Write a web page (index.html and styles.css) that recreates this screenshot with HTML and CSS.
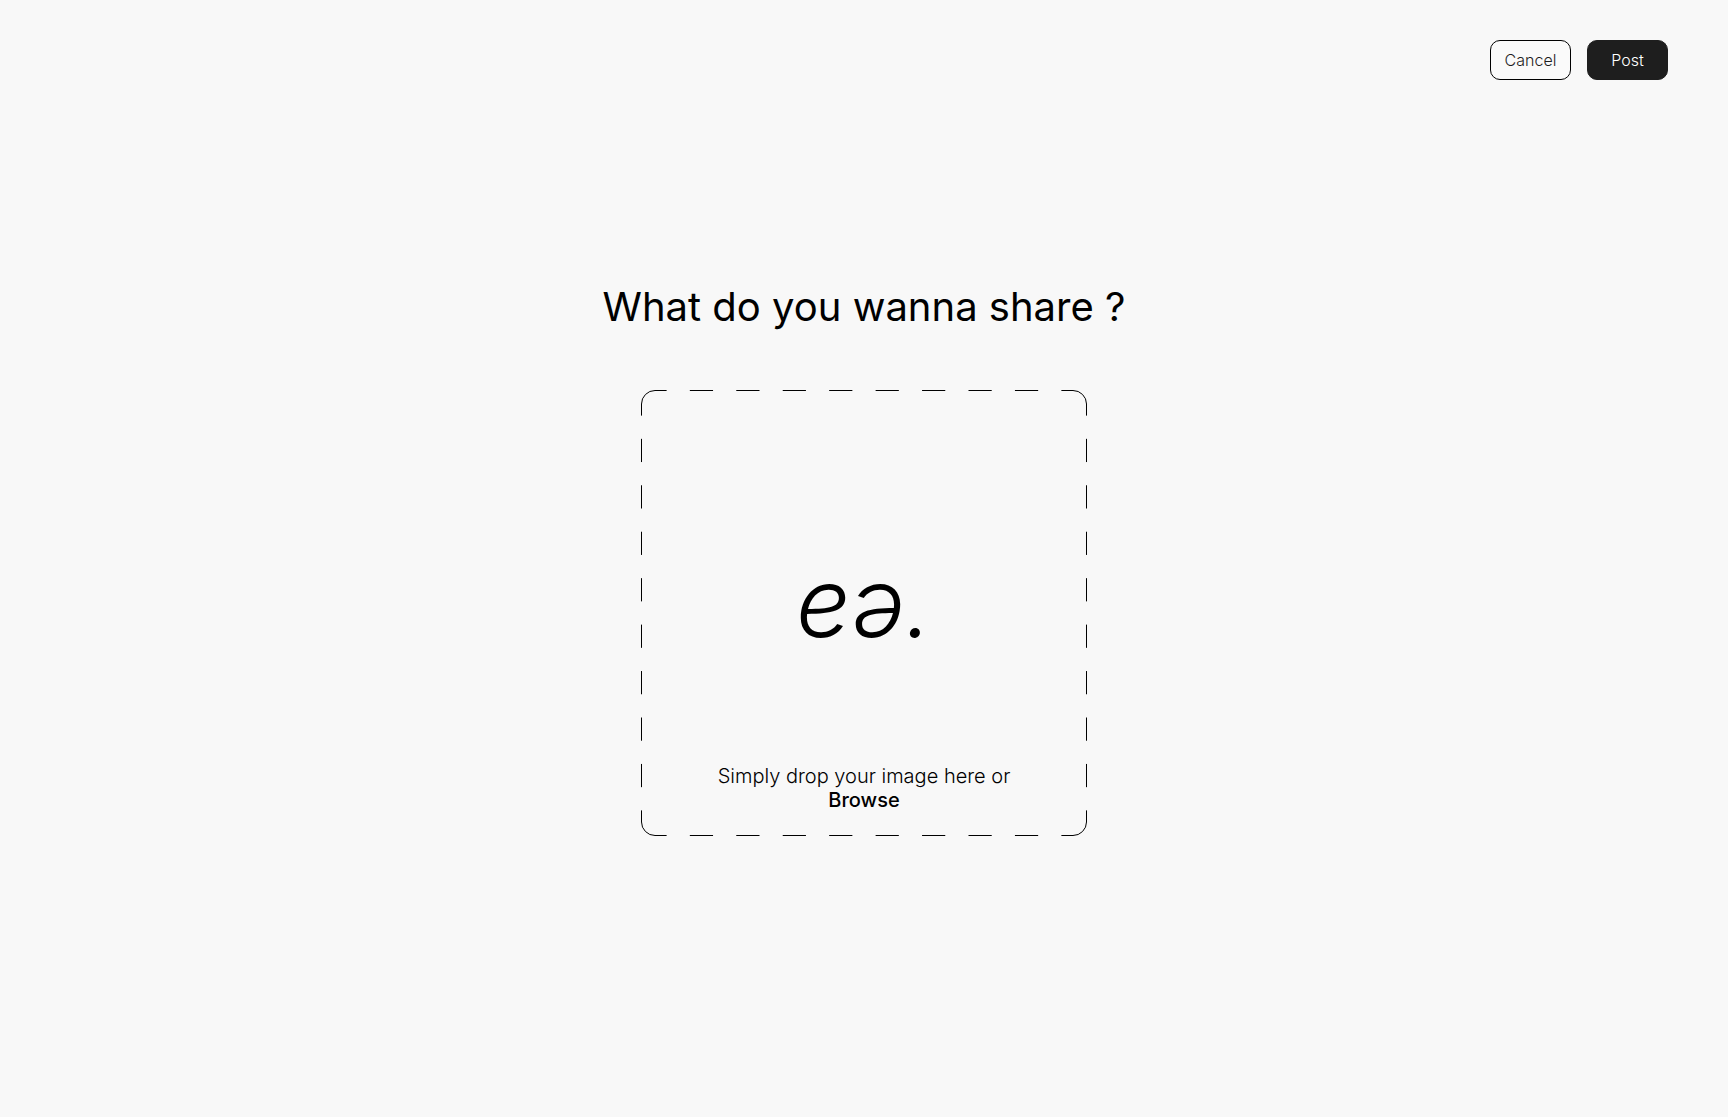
FILE: index.html
```html
<!DOCTYPE html>
<html lang="en">
<head>
  <meta charset="utf-8">
  <meta name="viewport" content="width=device-width, initial-scale=1">
  <title>Share a post</title>
  <link rel="stylesheet" href="styles.css">
</head>
<body>
  <header class="topbar">
    <button type="button" class="button button-outline">Cancel</button>
    <button type="submit" class="button button-solid">Post</button>
  </header>
  <main class="share">
    <h1 class="title">What do you wanna share ?</h1>
    <section class="dropzone" aria-label="Image upload">
      <!-- Each side spans nine dash periods, with a half dash joining each corner -->
      <svg class="outline" viewBox="0 0 446 446" aria-hidden="true">
        <g class="outline-sides">
          <path pathLength="36" d="M14 .5H432"/>
          <path pathLength="36" d="M445.500 14V432"/>
          <path pathLength="36" d="M14 445.500H432"/>
          <path pathLength="36" d="M.5 14V432"/>
        </g>
        <path d="M.5 14A13.500 13.500 0 0 1 14 .5M432 .5A13.500 13.500 0 0 1 445.500 14M445.500 432A13.500 13.500 0 0 1 432 445.500M14 445.500A13.500 13.500 0 0 1 .5 432"/>
      </svg>
      <div class="logo">eə.</div>
      <p class="hint">Simply drop your image here or <button type="button" class="browse">Browse</button></p>
    </section>
  </main>
</body>
</html>
```

FILE: styles.css
```css
* {
  box-sizing: border-box;
}

body {
  margin: 0;
  min-height: 100vh;
  background: #f8f8f8;
  color: #000;
  font-family: Inter, "Liberation Sans", sans-serif;
}

button {
  font: inherit;
  cursor: pointer;
}

.topbar {
  display: flex;
  justify-content: flex-end;
  gap: 16px;
  padding: 40px 60px 0;
}

.button {
  min-width: 81px;
  height: 40px;
  padding: 0 12px;
  border: 1px solid #000;
  border-radius: 10px;
  font-size: 16px;
  font-weight: 300;
}

.button-outline {
  background: #fafafa;
  color: #1e1e1e;
}

.button-solid {
  border-color: #1e1e1e;
  background: #1e1e1e;
  color: #fff;
}

.share {
  display: flex;
  flex-direction: column;
  align-items: center;
  gap: 59px;
  padding: 203px 24px 60px;
}

.title {
  margin: 0;
  font-size: 40px;
  line-height: 48px;
  font-weight: 400;
  text-align: center;
}

.dropzone {
  position: relative;
  display: flex;
  flex-direction: column;
  align-items: center;
  justify-content: flex-end;
  gap: 104px;
  width: 100%;
  max-width: 446px;
  aspect-ratio: 1;
  padding: 24px 60px;
}

.outline {
  position: absolute;
  inset: 0;
  width: 100%;
  height: 100%;
  fill: none;
  stroke: #000;
}

.outline-sides {
  stroke-dasharray: 2 2;
  stroke-dashoffset: 1;
}

.logo {
  font-size: 96px;
  line-height: 116px;
  font-style: italic;
  font-weight: 300;
  font-optical-sizing: none;
  font-variation-settings: "opsz" 14;
}

.hint {
  position: relative;
  margin: 0;
  font-size: 20px;
  line-height: 24px;
  font-weight: 300;
  text-align: center;
}

.browse {
  padding: 0;
  border: 0;
  background: none;
  color: inherit;
  font-weight: 500;
}
```
